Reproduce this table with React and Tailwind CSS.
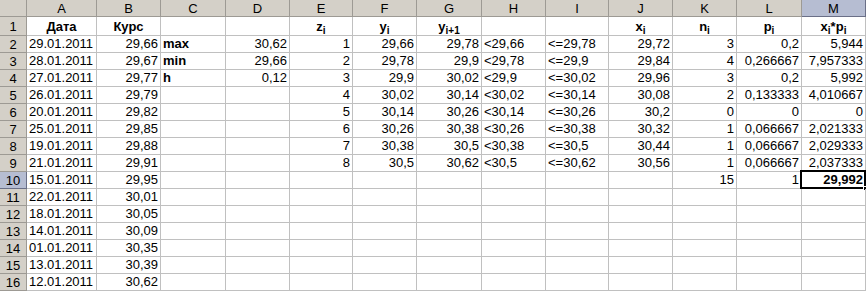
import React from 'react';

const COLS = ['A', 'B', 'C', 'D', 'E', 'F', 'G', 'H', 'I', 'J', 'K', 'L', 'M'];
const WIDTHS = [70, 64, 65, 64, 63, 64, 65, 64, 63, 64, 64, 65, 64];

const Sub = ({ base, sub }) => (
  <span>
    {base}
    <sub className="text-[10px]">{sub}</sub>
  </span>
);

// cell: [text, align, bold]
const L = (t, b) => ({ t, a: 'l', b });
const R = (t, b) => ({ t, a: 'r', b });
const C = (t, b) => ({ t, a: 'c', b });

const dates = ['29.01.2011', '28.01.2011', '27.01.2011', '26.01.2011', '20.01.2011', '25.01.2011', '19.01.2011', '21.01.2011', '15.01.2011', '22.01.2011', '18.01.2011', '14.01.2011', '01.01.2011', '13.01.2011', '12.01.2011'];
const rates = ['29,66', '29,67', '29,77', '29,79', '29,82', '29,85', '29,88', '29,91', '29,95', '30,01', '30,05', '30,09', '30,35', '30,39', '30,62'];
const y0 = ['29,66', '29,78', '29,9', '30,02', '30,14', '30,26', '30,38', '30,5'];
const y1 = ['29,78', '29,9', '30,02', '30,14', '30,26', '30,38', '30,5', '30,62'];
const xs = ['29,72', '29,84', '29,96', '30,08', '30,2', '30,32', '30,44', '30,56'];
const ns = ['3', '4', '3', '2', '0', '1', '1', '1'];
const ps = ['0,2', '0,266667', '0,2', '0,133333', '0', '0,066667', '0,066667', '0,066667'];
const xp = ['5,944', '7,957333', '5,992', '4,010667', '0', '2,021333', '2,029333', '2,037333'];
const stats = [['max', '30,62'], ['min', '29,66'], ['h', '0,12']];

const buildRows = () => {
  const rows = [];
  rows.push([
    C('Дата', true), C('Курс', true), null, null,
    C(<Sub base="z" sub="i" />, true), C(<Sub base="y" sub="i" />, true), C(<Sub base="y" sub="i+1" />, true),
    null, null,
    C(<Sub base="x" sub="i" />, true), C(<Sub base="n" sub="i" />, true), C(<Sub base="p" sub="i" />, true),
    C(<span><Sub base="x" sub="i" />*<Sub base="p" sub="i" /></span>, true),
  ]);
  for (let i = 0; i < 15; i++) {
    const r = Array(13).fill(null);
    r[0] = L(dates[i]);
    r[1] = R(rates[i]);
    if (i < 3) {
      r[2] = L(stats[i][0], true);
      r[3] = R(stats[i][1]);
    }
    if (i < 8) {
      r[4] = R(String(i + 1));
      r[5] = R(y0[i]);
      r[6] = R(y1[i]);
      r[7] = L('<' + y0[i]);
      r[8] = L('<=' + y1[i]);
      r[9] = R(xs[i]);
      r[10] = R(ns[i]);
      r[11] = R(ps[i]);
      r[12] = R(xp[i]);
    }
    if (i === 8) {
      r[10] = R('15');
      r[11] = R('1');
      r[12] = { t: '29,992', a: 'r', b: true, sel: true };
    }
    rows.push(r);
  }
  return rows;
};

const alignCls = { l: 'justify-start', r: 'justify-end', c: 'justify-center' };

export default function App() {
  const rows = buildRows();
  return (
    <div
      className="w-[866px] h-[292px] bg-white overflow-hidden text-black select-none"
      style={{ fontFamily: '"Liberation Sans", Arial, sans-serif' }}
    >
      <div className="flex h-[17px] bg-[#d4d0c8] text-[13px]">
        <div className="w-[27px] shrink-0 border-r border-b border-[#9d9a94]" />
        {COLS.map((c, i) => (
          <div
            key={c}
            style={{ width: WIDTHS[i] }}
            className={`shrink-0 flex items-center justify-center border-r border-b leading-none ${
              c === 'M' ? 'bg-[#b6bdd2] border-[#6a6f87]' : 'border-[#9d9a94]'
            }`}
          >
            {c}
          </div>
        ))}
      </div>
      {rows.map((r, ri) => (
        <div key={ri} className={`flex text-[13px] ${ri === 0 ? 'h-[19px]' : 'h-[17px]'}`}>
          <div
            className={`w-[27px] shrink-0 flex items-center justify-center border-r border-b leading-none ${
              ri === 9 ? 'bg-[#b6bdd2] border-[#6a6f87]' : 'bg-[#d4d0c8] border-[#9d9a94]'
            }`}
          >
            {ri + 1}
          </div>
          {r.map((cell, ci) => (
            <div
              key={ci}
              style={{ width: WIDTHS[ci] }}
              className={`relative shrink-0 flex items-end border-r border-b border-[#c0c0c0] px-[2px] pb-[1px] leading-[14px] whitespace-nowrap ${
                cell ? alignCls[cell.a] : ''
              } ${cell && cell.b ? 'font-bold' : ''}`}
            >
              {cell ? cell.t : null}
              {cell && cell.sel && (
                <div className="absolute left-[-2px] top-[-2px] right-[-1px] bottom-[-1px] border-2 border-black">
                  <div className="absolute right-[-4px] bottom-[-4px] w-[5px] h-[5px] bg-black border border-white" />
                </div>
              )}
            </div>
          ))}
        </div>
      ))}
    </div>
  );
}
